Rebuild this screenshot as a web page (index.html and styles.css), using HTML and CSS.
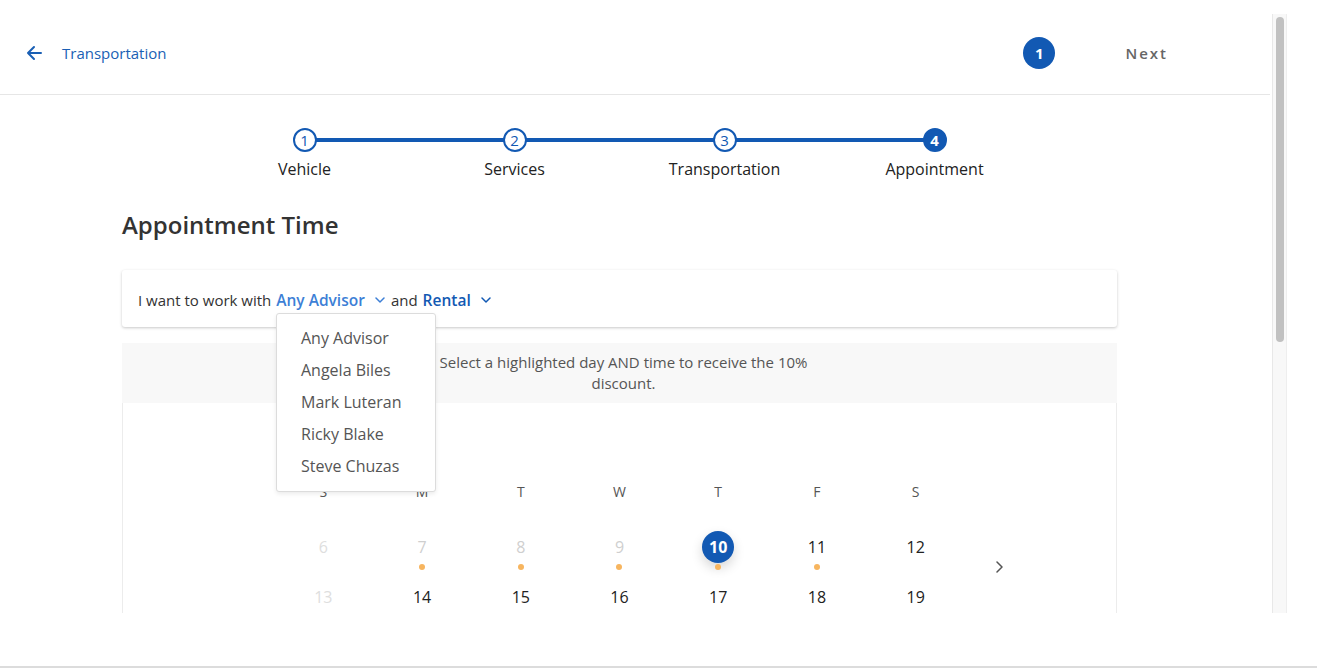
FILE: index.html
```html
<!DOCTYPE html>
<html lang="en">
<head>
<meta charset="utf-8">
<title>Appointment Time</title>
<link rel="stylesheet" href="styles.css">
</head>
<body>
<div class="window">
  <div class="viewport">
    <div class="page">
      <header class="topbar">
        <a class="back" href="#">
          <svg class="back-icon" width="16" height="16" viewBox="0 0 16 16"><path d="M15 8H2M8 2L2 8L8 14" fill="none" stroke="#1a5fb4" stroke-width="2" stroke-linecap="round" stroke-linejoin="round"/></svg>
          <span>Transportation</span>
        </a>
        <div class="topbar-right">
          <span class="badge">1</span>
          <span class="next">Next</span>
        </div>
      </header>

      <div class="content">
        <nav class="stepper">
          <div class="step"><span class="step-dot">1</span><span class="step-label">Vehicle</span></div>
          <div class="step"><span class="step-dot">2</span><span class="step-label">Services</span></div>
          <div class="step"><span class="step-dot">3</span><span class="step-label">Transportation</span></div>
          <div class="step active"><span class="step-dot">4</span><span class="step-label">Appointment</span></div>
        </nav>

        <h1 class="title">Appointment Time</h1>

        <div class="selector">
          <span>I want to work with</span>
          <span class="pick advisor">Any Advisor</span>
          <svg class="chev" width="10" height="6" viewBox="0 0 10 6"><path d="M1 1L5 5L9 1" fill="none" stroke="#3d7fd6" stroke-width="1.5" stroke-linecap="round" stroke-linejoin="round"/></svg>
          <span class="and">and</span>
          <span class="pick rental">Rental</span>
          <svg class="chev" width="10" height="6" viewBox="0 0 10 6"><path d="M1 1L5 5L9 1" fill="none" stroke="#1259b3" stroke-width="1.5" stroke-linecap="round" stroke-linejoin="round"/></svg>
          <ul class="dropdown">
            <li>Any Advisor</li>
            <li>Angela Biles</li>
            <li>Mark Luteran</li>
            <li>Ricky Blake</li>
            <li>Steve Chuzas</li>
          </ul>
        </div>

        <div class="notice"><p>Select a highlighted day AND time to receive the 10% discount.</p></div>

        <div class="calendar">
          <div class="cal-body">
            <div class="cal-grid">
              <span class="wd">S</span><span class="wd">M</span><span class="wd">T</span><span class="wd">W</span><span class="wd">T</span><span class="wd">F</span><span class="wd">S</span>

              <div class="day faint"><span class="num">6</span></div>
              <div class="day past"><span class="num">7</span><i class="dot"></i></div>
              <div class="day past"><span class="num">8</span><i class="dot"></i></div>
              <div class="day past"><span class="num">9</span><i class="dot"></i></div>
              <div class="day selected"><span class="num">10</span><i class="dot"></i></div>
              <div class="day"><span class="num">11</span><i class="dot"></i></div>
              <div class="day"><span class="num">12</span></div>

              <div class="day faint"><span class="num">13</span></div>
              <div class="day"><span class="num">14</span></div>
              <div class="day"><span class="num">15</span></div>
              <div class="day"><span class="num">16</span></div>
              <div class="day"><span class="num">17</span></div>
              <div class="day"><span class="num">18</span></div>
              <div class="day"><span class="num">19</span></div>
            </div>
            <button class="cal-next" type="button" aria-label="Next week">
              <svg width="7" height="12" viewBox="0 0 7 12"><path d="M1 1L6 6L1 11" fill="none" stroke="#555" stroke-width="1.5" stroke-linecap="round" stroke-linejoin="round"/></svg>
            </button>
          </div>
        </div>
      </div>
    </div>
    <div class="scrollbar"><div class="thumb"></div></div>
  </div>
  <div class="bottom-rule"></div>
</div>
</body>
</html>
```
FILE: styles.css
```css
* { box-sizing: border-box; }

html, body {
  margin: 0;
  padding: 0;
  background: #fff;
}

body {
  font-family: "Open Sans", "Noto Sans", sans-serif;
  color: #333;
  width: 1317px;
  height: 668px;
  overflow: hidden;
}

.window {
  display: flex;
  flex-direction: column;
  height: 668px;
}

.viewport {
  display: flex;
  width: 1287px;
  height: 613px;
  overflow: hidden;
}

.page {
  width: 1272px;
  flex: none;
}

/* header */
.topbar {
  height: 95px;
  padding: 11px 0 0 26px;
  border-bottom: 1px solid #e6e6e6;
  display: flex;
  align-items: center;
  margin-right: 2px;
}

.back {
  display: flex;
  align-items: center;
  text-decoration: none;
  color: #1a5fb4;
  font-size: 15px;
}

.back-icon { margin-right: 20px; }

.topbar-right {
  margin-left: auto;
  display: flex;
  align-items: center;
  padding-right: 102px;
}

.badge {
  width: 32px;
  height: 32px;
  border-radius: 50%;
  background: #1259b3;
  color: #fff;
  font-weight: 700;
  font-size: 15px;
  display: flex;
  align-items: center;
  justify-content: center;
}

.next {
  margin-left: 70px;
  font-size: 15px;
  font-weight: 600;
  letter-spacing: 2px;
  color: #666;
}

/* content column */
.content {
  width: 995px;
  margin-left: 122px;
}

/* stepper */
.stepper {
  position: relative;
  width: 840px;
  margin: 33px auto 0;
  display: flex;
}

.stepper::before {
  content: "";
  position: absolute;
  left: 105px;
  right: 105px;
  top: 10px;
  height: 4px;
  background: #1259b3;
}

.step {
  width: 210px;
  display: flex;
  flex-direction: column;
  align-items: center;
  position: relative;
}

.step-dot {
  width: 24px;
  height: 24px;
  border-radius: 50%;
  border: 2px solid #1259b3;
  background: #fff;
  color: #1259b3;
  font-size: 15px;
  line-height: 20px;
  text-align: center;
}

.step.active .step-dot {
  background: #1259b3;
  color: #fff;
  font-weight: 700;
}

.step-label {
  margin-top: 6px;
  font-size: 16px;
  line-height: 22px;
  color: #222;
}

/* title */
.title {
  margin: 29px 0 0;
  font-size: 24px;
  line-height: 32px;
  font-weight: 600;
  color: #333;
}

/* selector */
.selector {
  position: relative;
  margin-top: 29px;
  height: 57px;
  padding: 2px 16px 0;
  background: #fff;
  border-radius: 3px;
  box-shadow: 0 1px 3px rgba(0, 0, 0, 0.22);
  display: flex;
  align-items: center;
  font-size: 15px;
  color: #333;
}

.pick {
  font-weight: 600;
  margin-left: 5px;
  font-size: 15.5px;
}

.advisor { color: #3d7fd6; }
.rental { color: #1259b3; }

.chev { margin-left: 10px; }

.and { margin-left: 6px; }

.dropdown {
  position: absolute;
  left: 154px;
  top: 43px;
  width: 160px;
  margin: 0;
  padding: 8px 0 9px;
  list-style: none;
  background: #fff;
  border: 1px solid #dcdcdc;
  border-radius: 3px;
  box-shadow: 0 2px 4px rgba(0, 0, 0, 0.08);
  z-index: 5;
}

.dropdown li {
  padding-left: 24px;
  font-size: 16px;
  line-height: 32px;
  color: #555;
}

/* notice */
.notice {
  margin-top: 16px;
  height: 60px;
  background: #f8f8f8;
  padding-top: 9px;
}

.notice p {
  width: 410px;
  margin: 0 auto;
  padding-left: 8px;
  text-align: center;
  font-size: 15px;
  line-height: 21px;
  color: #555;
}

/* calendar */
.calendar {
  background: #fff;
  border-left: 1px solid #ececec;
  border-right: 1px solid #ececec;
  height: 260px;
  padding-top: 79px;
}

.cal-body {
  display: grid;
  grid-template-columns: 1fr 691px 1fr;
}

.cal-grid {
  grid-column: 2;
  display: grid;
  grid-template-columns: repeat(7, 1fr);
}

.wd {
  text-align: center;
  font-size: 14px;
  line-height: 20px;
  color: #555;
  margin-bottom: 29px;
}

.day {
  height: 50px;
  display: flex;
  flex-direction: column;
  align-items: center;
}

.num {
  width: 32px;
  height: 32px;
  border-radius: 50%;
  display: flex;
  align-items: center;
  justify-content: center;
  font-size: 16px;
  color: #222;
}

.day.past .num { color: #cfcfcf; }
.day.faint .num { color: #dedede; }

.day.selected .num {
  background: #1259b3;
  color: #fff;
  font-weight: 700;
  box-shadow: 0 5px 12px rgba(0, 0, 0, 0.16);
}

.dot {
  width: 6px;
  height: 6px;
  border-radius: 50%;
  background: #f7b55f;
  margin-top: 1px;
}

.cal-next {
  grid-column: 3;
  justify-self: start;
  align-self: start;
  margin: 79px 0 0 31px;
  padding: 0;
  border: 0;
  background: none;
  width: 7px;
  height: 12px;
  display: flex;
}

/* fake scrollbar */
.scrollbar {
  width: 15px;
  margin-top: 14px;
  background: #f8f8f8;
  border-left: 1px solid #e8e8e8;
  border-right: 1px solid #eeeeee;
  padding-top: 3px;
}

.thumb {
  width: 8px;
  height: 325px;
  margin-left: 3px;
  border-radius: 4px;
  background: #c1c1c1;
}

.bottom-rule {
  margin-top: 53px;
  height: 2px;
  background: #dcdcdc;
}
```
